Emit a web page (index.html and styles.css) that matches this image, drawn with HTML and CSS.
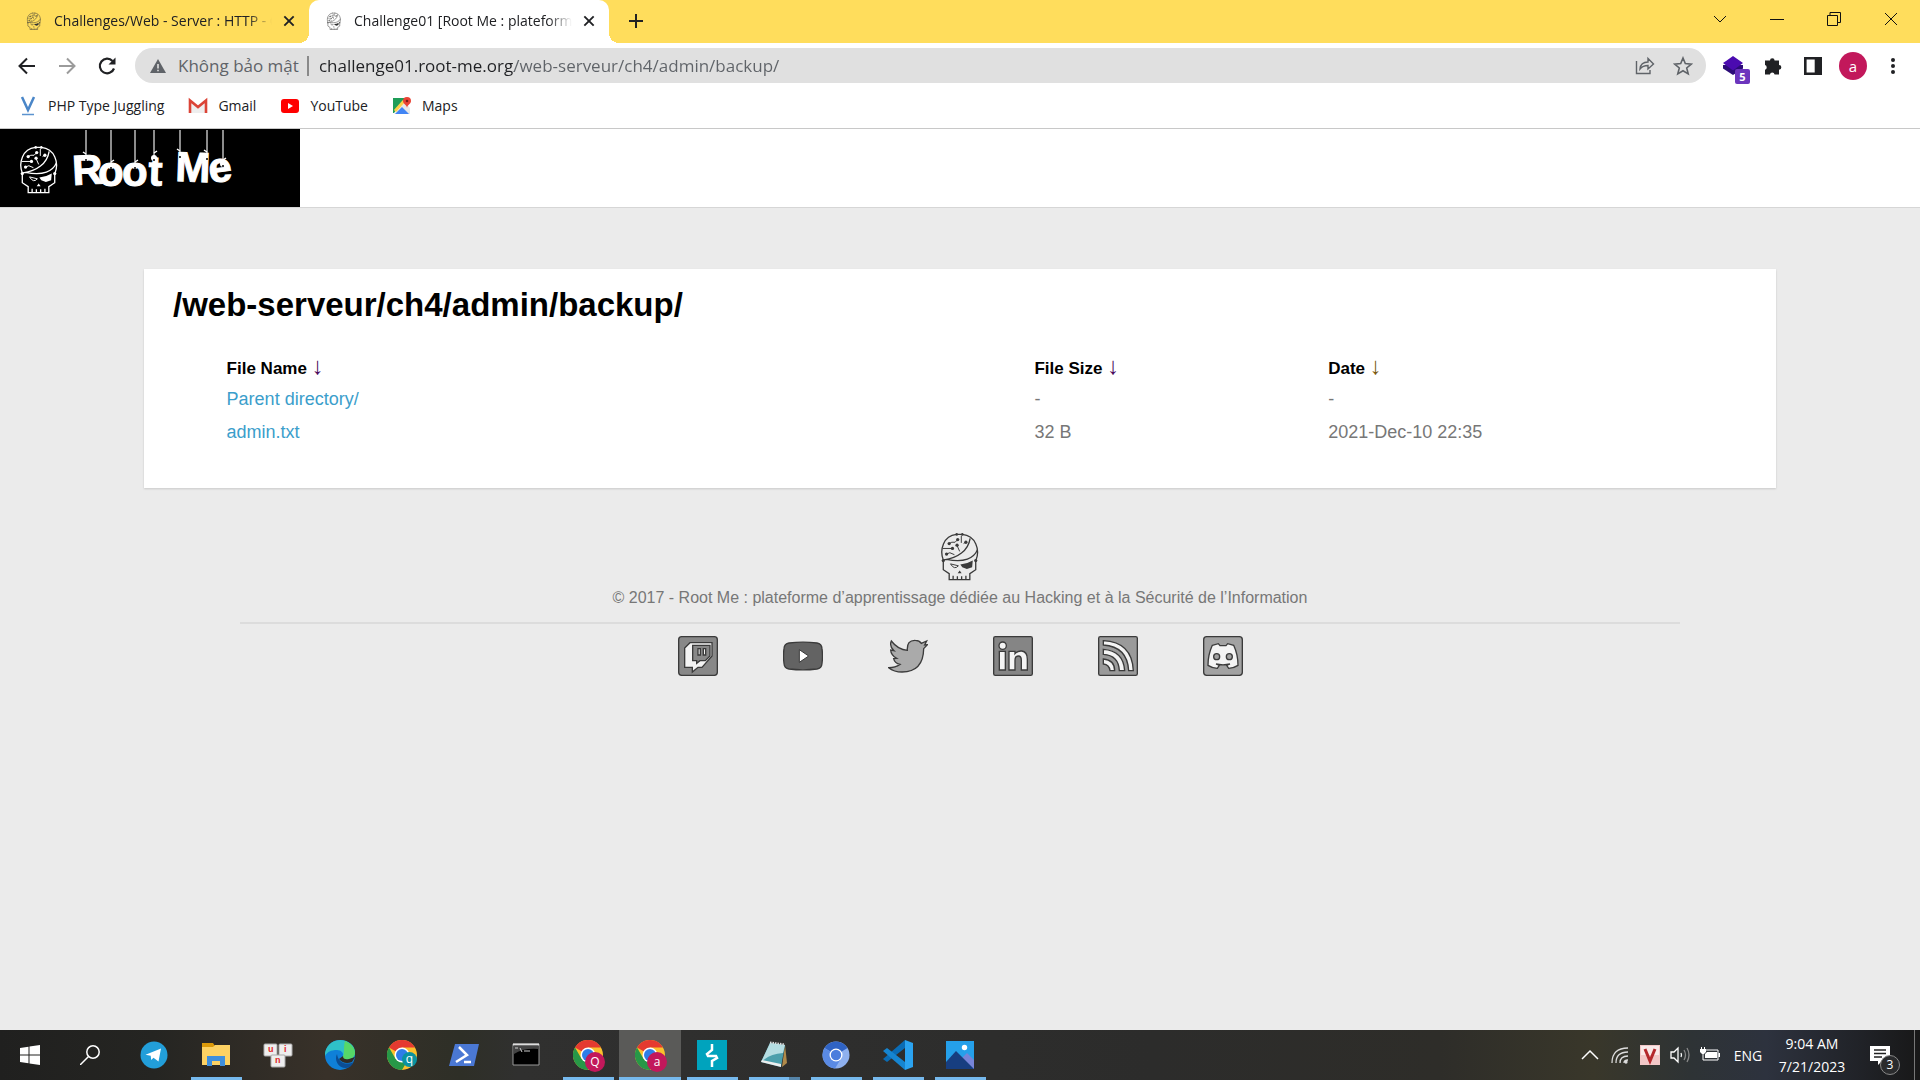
FILE: index.html
```html
<!DOCTYPE html>
<html lang="fr">
<head>
<meta charset="utf-8">
<title>Challenge01 [Root Me : plateforme d’apprentissage]</title>
<link rel="stylesheet" href="styles.css">
</head>
<body>
<svg class="defs" aria-hidden="true">
  <symbol id="skull" viewBox="33 17 116 150">
    <g fill="none" stroke="currentColor" stroke-width="4">
      <path d="M40 104C28 74 40 30 80 26M98 26C140 30 152 74 140 104M84 26h10"/>
      <path d="M40 108v26l18 12v18h63v-18l18-12v-26M70 152v11M83 154v9M96 154v9M109 152v11"/>
      <path d="M42 104C84 98 116 76 122 38M144 74C134 98 104 114 50 102"/>
    </g>
    <g fill="none" stroke="currentColor" stroke-width="3">
      <path d="M58 54l8-4h10l8-8M38 69h30M82 60l8 18M50 86l10-4 14 6M95 30v22M110 48l-8 6"/>
      <path d="M62 116l24 6q-12 14-24-6z"/>
    </g>
    <g fill="currentColor">
      <circle cx="58" cy="54" r="5"/><circle cx="84" cy="42" r="5"/><circle cx="68" cy="69" r="5"/><circle cx="82" cy="59" r="5"/><circle cx="50" cy="86" r="5"/><circle cx="109" cy="50" r="5"/>
      <circle cx="81" cy="26" r="4"/><circle cx="98" cy="26" r="4"/><circle cx="40" cy="106" r="5"/><circle cx="139" cy="106" r="5"/>
      <path d="M92 118q22-2 38-12l-2 20-16 6-14-6zM90 136l6 9H84z"/>
    </g>
  </symbol>
  <symbol id="close" viewBox="0 0 12 12"><path d="M2 2l8 8M10 2l-8 8" stroke="currentColor" stroke-width="1.600" fill="none"/></symbol>
  <symbol id="chrome" viewBox="0 0 30 30">
    <circle cx="15" cy="15" r="15" fill="#fbc02d"/>
    <path d="M15 15L2 7.500A15 15 0 0 1 28 7.500H15z" fill="#e53a30"/>
    <path d="M2 7.500A15 15 0 0 0 15 30l6.500-11.200L15 15 8.500 18.700z" fill="#279847"/>
    <circle cx="15" cy="15" r="7.500" fill="#fff"/><circle cx="15" cy="15" r="6" fill="#2f7de8"/>
  </symbol>
</svg>

<header class="browser">
  <div class="tabstrip">
    <div class="tab">
      <svg class="favicon"><use href="#skull"/></svg>
      <span class="tab-title">Challenges/Web - Server : HTTP - Open redirect</span>
      <button class="tab-close" aria-label="Close tab"><svg><use href="#close"/></svg></button>
    </div>
    <div class="tab active">
      <svg class="favicon"><use href="#skull"/></svg>
      <span class="tab-title">Challenge01 [Root Me : plateforme d’apprentissage</span>
      <button class="tab-close" aria-label="Close tab"><svg><use href="#close"/></svg></button>
    </div>
    <button class="new-tab" aria-label="New tab"><svg viewBox="0 0 16 16" width="16" height="16"><path d="M8 1v14M1 8h14" stroke="#222" stroke-width="2"/></svg></button>
    <div class="window-controls">
      <button aria-label="Search tabs"><svg viewBox="0 0 14 14" width="14" height="14"><path d="M1 4l6 6 6-6"/></svg></button>
      <button aria-label="Minimize"><svg viewBox="0 0 14 14" width="14" height="14"><path d="M0 7.500h14"/></svg></button>
      <button aria-label="Restore"><svg viewBox="0 0 14 14" width="14" height="14"><path d="M.5 3.500h10v10H.500zM3 3V.5h10.500v10H11"/></svg></button>
      <button aria-label="Close"><svg viewBox="0 0 14 14" width="14" height="14"><path d="M1 1l12 12M13 1L1 13"/></svg></button>
    </div>
  </div>

  <div class="toolbar">
    <button aria-label="Back"><svg viewBox="0 0 20 20" width="20" height="20"><path d="M18 10H3M10 2.500L2.500 10l7.500 7.500" fill="none" stroke="#202124" stroke-width="2"/></svg></button>
    <button aria-label="Forward"><svg viewBox="0 0 20 20" width="20" height="20"><path d="M2 10h15M10 2.500l7.500 7.500-7.500 7.500" fill="none" stroke="#9b9b9b" stroke-width="2"/></svg></button>
    <button aria-label="Reload"><svg viewBox="0 0 20 20" width="20" height="20"><path d="M17 12.500A7.300 7.300 0 1 1 15.500 5" fill="none" stroke="#202124" stroke-width="2.200"/><path d="M18.500 1.500v7h-7z" fill="#202124"/></svg></button>
    <div class="omnibox">
      <svg viewBox="0 0 16 16" width="16" height="16"><path d="M8 1l8 14H0z" fill="#5f6368"/><path d="M8 6v4.500M8 11.700v1.600" stroke="#e0e0e0" stroke-width="1.600"/></svg>
      <label class="security" for="url">Không bảo mật</label>
      <input id="url" class="url" type="text" spellcheck="false" value="challenge01.root-me.org/web-serveur/ch4/admin/backup/">
      <button aria-label="Share"><svg viewBox="0 0 20 20" width="20" height="20"><path d="M1.500 5v12.500H15V14M5 13c.5-5 3.500-7 8-7V2.500L18.500 8 13 13V9.500c-4 0-6 1-8 3.500z" fill="none" stroke="#5f6368" stroke-width="1.400"/></svg></button>
      <button aria-label="Bookmark this page"><svg viewBox="0 0 20 20" width="20" height="20"><path d="M10 2l2.300 5.600 6 .5-4.600 3.900 1.500 5.900L10 14.700l-5.200 3.200L6.300 12 1.700 8.100l6-.5z" fill="none" stroke="#5f6368" stroke-width="1.600"/></svg></button>
    </div>
    <div class="extensions">
      <button aria-label="Extension"><svg viewBox="0 0 20 20" width="20" height="20"><path d="M0 12.500l10 6.500 10-6.500V9L0 9z" fill="#2c0c78"/><path d="M10 0l10 7-10 7.500L0 7l3-2z" fill="#4b0bb0"/></svg><span class="count">5</span></button>
      <button aria-label="Extensions"><svg viewBox="0 0 20 20" width="20" height="20"><path d="M2 4.500h5a2.300 2.300 0 1 1 4.600 0H16V9a2.300 2.300 0 1 1 0 4.700V18.500h-4.400a2.400 2.400 0 0 0-4.700 0H2v-4.800a2.400 2.400 0 0 0 0-4.600z" fill="#202124"/></svg></button>
      <button aria-label="Side panel"><svg viewBox="0 0 18 18" width="18" height="18"><path d="M1.300 1.300h15.400v15.400H1.300zM12 1v16M14.500 1v16" fill="none" stroke="#202124" stroke-width="2.600"/></svg></button>
      <button class="avatar" aria-label="Profile">a</button>
      <button aria-label="Menu"><svg viewBox="0 0 20 20" width="20" height="20" fill="#202124"><circle cx="10" cy="4" r="2"/><circle cx="10" cy="10" r="2"/><circle cx="10" cy="16" r="2"/></svg></button>
    </div>
  </div>

  <nav class="bookmarks">
    <a href="#"><svg viewBox="0 0 20 20" width="20" height="20"><path d="M4 1l6 13 6-13" fill="none" stroke="#4a86c8" stroke-width="2.500"/><path d="M4 18.500h12" stroke="#5b93cf" stroke-width="1.500"/></svg>PHP Type Juggling</a>
    <a href="#"><svg viewBox="0 0 20 20" width="20" height="20"><path d="M2 4l8 7 8-7v13H2z" fill="#eee"/><path d="M2 17V4.500l8 6.500 8-6.500V17" fill="none" stroke="#db4437" stroke-width="2.600"/></svg>Gmail</a>
    <a href="#"><svg viewBox="0 0 20 20" width="20" height="20"><rect x="1" y="3" width="18" height="14" rx="3" fill="#f00"/><path d="M8 7l5 3-5 3z" fill="#fff"/></svg>YouTube</a>
    <a href="#"><svg viewBox="0 0 20 20" width="20" height="20"><path d="M1 2h13L2 17H1z" fill="#1f9d58"/><path d="M2 18L13 6l5 6v6z" fill="#e8e8e8"/><path d="M3 18l7-7 7 7z" fill="#4285f4"/><path d="M3 15L12 5" stroke="#fdd148" stroke-width="3"/><path d="M15 12c0-3-4-4-4-7a4 4 0 0 1 8 0c0 3-4 4-4 7z" fill="#ea4335"/><circle cx="15" cy="5" r="1.300" fill="#7c1f16"/></svg>Maps</a>
  </nav>
</header>

<div class="site-header">
  <a class="logo" href="#" aria-label="Root Me">
    <svg class="logo-art" viewBox="0 0 300 78">
      <svg x="20" y="15" width="38" height="50"><use href="#skull"/></svg>
      <path d="M86 1v27M111 1v36M135 1v36M154 1v27M180 1v25M207 1v27M223 1v33" stroke="#bbb" stroke-width="1.500"/>
      <text class="logo-text" x="73 98 122 148 165 175 210" y="56 57 57 56 56 52 54" rotate="-3 0 0 2 0 2 -7">Root Me</text>
      <g><circle cx="86" cy="29" r="3" fill="#fff"/><circle cx="111" cy="37" r="3" fill="#fff"/><circle cx="135" cy="37" r="3" fill="#fff"/><circle cx="154" cy="29" r="3" fill="#fff"/><circle cx="223" cy="35" r="3" fill="#fff"/></g>
      <g><circle cx="86" cy="31" r="1"/><circle cx="111" cy="39" r="1"/><circle cx="135" cy="39" r="1"/><circle cx="154" cy="31" r="1"/><circle cx="180" cy="28" r="1"/><circle cx="207" cy="30" r="1"/><circle cx="223" cy="37" r="1"/></g>
      <path d="M83 23l3 2M114 31l-3 2M138 31l-3 2M157 22l-3 2M177 20l3 2M204 21l3 2M226 29l-3 2" stroke="#fff" stroke-width="1.500"/>
    </svg>
  </a>
</div>

<main class="page">
  <section class="card">
    <h1>/web-serveur/ch4/admin/backup/</h1>
    <table class="listing">
      <thead>
        <tr><th class="name">File Name <a href="#">↓</a></th><th class="size">File Size <a href="#">↓</a></th><th class="date">Date <a href="#">↓</a></th></tr>
      </thead>
      <tbody>
        <tr><td><a href="#">Parent directory/</a></td><td>-</td><td>-</td></tr>
        <tr><td><a href="#">admin.txt</a></td><td>32 B</td><td>2021-Dec-10 22:35</td></tr>
      </tbody>
    </table>
  </section>

  <footer class="footer">
    <svg class="footer-skull"><use href="#skull"/></svg>
    <p>© 2017 - Root Me : plateforme d’apprentissage dédiée au Hacking et à la Sécurité de l’Information</p>
    <hr>
    <nav class="social">
      <a href="#" aria-label="Twitch"><svg viewBox="0 0 120 120"><rect x="2" y="2" width="116" height="116" rx="9" fill="#888" stroke="#3b3b3b" stroke-width="4"/><g stroke="#3b3b3b" stroke-width="4"><path d="M20 36l16-16h66v40L72 94H60l-17 14V94H20z" fill="#f4f4f4"/><path d="M44 28h52v32L82 74H66L56 82v-8H44z" fill="#888"/><path d="M60 38h7v19h-7zM76 38h7v19h-7z" fill="#f4f4f4"/></g></svg></a>
      <a href="#" aria-label="YouTube"><svg viewBox="0 0 120 120"><path d="M18 21Q60 16 102 21Q116 23 117 38Q120 60 117 82Q116 97 102 99Q60 104 18 99Q4 97 3 82Q0 60 3 38Q4 23 18 21z" fill="#636363" stroke="#3b3b3b" stroke-width="4"/><path d="M49 41l28 19-28 19z" fill="#fff" stroke="#3b3b3b" stroke-width="3"/></svg></a>
      <a href="#" aria-label="Twitter"><svg viewBox="0 0 120 120"><path d="M2 95q20 0 34-10Q20 82 17 68l9-1Q9 58 8 42l10 2Q3 30 10 15q20 26 48 28Q56 12 82 13q12 0 18 9l16-7-6 12 8-1-11 12Q106 107 42 108 18 108 2 95z" fill="#aaa" stroke="#3b3b3b" stroke-width="4"/></svg></a>
      <a href="#" aria-label="LinkedIn"><svg viewBox="0 0 120 120"><rect x="2" y="2" width="116" height="116" rx="5" fill="#858585" stroke="#3b3b3b" stroke-width="4"/><g fill="#f4f4f4" stroke="#3b3b3b" stroke-width="4"><circle cx="29" cy="29" r="11"/><path d="M19 46h18v56H19zM48 46h18v7q8-9 20-8 17 2 17 24v33H85V73q0-13-9-13-10 0-10 13v29H48z"/></g></svg></a>
      <a href="#" aria-label="RSS"><svg viewBox="0 0 120 120"><rect x="2" y="2" width="116" height="116" rx="5" fill="#9a9a9a" stroke="#3b3b3b" stroke-width="4"/><path d="M16 14q86 4 90 90H92Q88 32 16 27zM16 40q60 4 64 64H64Q62 58 16 55zM16 69q34 3 34 35H36q-2-18-20-20z" fill="#f4f4f4" stroke="#3b3b3b" stroke-width="4"/></svg></a>
      <a href="#" aria-label="Discord"><svg viewBox="0 0 120 120"><rect x="2" y="2" width="116" height="116" rx="9" fill="#a2a2a2" stroke="#3b3b3b" stroke-width="4"/><path d="M28 28l18-5 5 6h18l5-6 18 5q13 28 13 60-12 8-28 9l-6-9 10-4q-21 5-42 0l10 4-6 9Q27 96 15 88q0-32 13-60z" fill="#f4f4f4" stroke="#3b3b3b" stroke-width="4"/><circle cx="41" cy="62" r="9" fill="#a2a2a2" stroke="#3b3b3b" stroke-width="4"/><circle cx="79" cy="62" r="9" fill="#a2a2a2" stroke="#3b3b3b" stroke-width="4"/></svg></a>
    </nav>
  </footer>
</main>

<div class="taskbar">
  <button class="start" aria-label="Start"><svg viewBox="0 0 20 20" width="20" height="20" fill="#fff"><path d="M0 3l8.500-1.200v7.700H0zM9.500 1.600L20 0v9.500H9.500zM0 10.500h8.500v7.700L0 17zM9.500 10.500H20V20L9.500 18.400z"/></svg></button>
  <button class="search" aria-label="Search"><svg viewBox="0 0 20 20" width="20" height="20" fill="none" stroke="#fff" stroke-width="1.500"><circle cx="13" cy="7" r="6.200"/><path d="M8.500 11.500L0 20"/></svg></button>
  <div class="apps">
    <button aria-label="Telegram"><svg viewBox="0 0 30 30"><circle cx="15" cy="15" r="13.500" fill="#229ed9"/><path d="M6.500 14.700L22 8.500l-2.500 13-5-3.800-2.300 2.400-.5-4.300z" fill="#fff"/></svg></button>
    <button class="open" aria-label="File Explorer"><svg viewBox="0 0 30 30"><path d="M1 3h11l2 3h-1v4H1z" fill="#dc9a0a"/><path d="M1 7h11l2-2h15v20H1z" fill="#fdd263"/><path d="M6 26V16h18v10h-5v-5h-8v5z" fill="#3f8fdc"/></svg></button>
    <button aria-label="UniKey"><svg viewBox="0 0 30 30"><g fill="#eee" stroke="#aaa"><rect x="1" y="4" width="13" height="12" rx="1"/><rect x="16" y="4" width="13" height="12" rx="1"/><rect x="8" y="15" width="14" height="12" rx="1"/></g><g class="keys"><text x="5" y="12">u</text><text x="21" y="12">i</text><text x="12" y="23">n</text></g></svg></button>
    <button aria-label="Edge"><svg viewBox="0 0 30 30"><circle cx="15" cy="15" r="15" fill="#0f80d8"/><path d="M0 13C2 3 10 0 15 0c9 0 15 6 15 12 0 5-4 8-9 8-4 0-4-2-3-4 1-3-2-6-6-6-6 0-10 2-12 6z" fill="#2fc0c8"/><path d="M20 1c7 3 10 8 10 12 0 4-4 7-9 7-4 0-4-2-3-4 2-3 0-8 2-15z" fill="#56d868"/><path d="M12 14c-3 6 1 14 9 14 4 0 6-3 8-6-9 4-16 0-17-8z" fill="#0b4d94"/><path d="M30 17l-3 5q-8 3-13-3l4-3q0 4 6 3z" fill="#302c26"/></svg></button>
    <button aria-label="Chrome"><svg viewBox="0 0 30 30"><use href="#chrome"/></svg><span class="profile teal">q</span></button>
    <button aria-label="PowerShell"><svg viewBox="0 0 30 30"><path d="M6 4h24l-5 22H0z" fill="#4a78d4"/><path d="M10 7l8 8-11 7M15 22h7" fill="none" stroke="#fff" stroke-width="2.500"/></svg></button>
    <button aria-label="Command Prompt"><svg viewBox="0 0 30 30"><path d="M2 4h26v21H2z" fill="#000" stroke="#999"/><path d="M3 6h24v3Q12 8 3 14z" fill="#444"/><path d="M2 4.500h26" stroke="#ddd" stroke-width="2"/><path d="M4 8h3M9 8l2 4M13 11h6" stroke="#ccc"/></svg></button>
    <button class="open" aria-label="Chrome, profile Q"><svg viewBox="0 0 30 30"><use href="#chrome"/></svg><span class="profile">Q</span></button>
    <button class="open current" aria-label="Chrome, profile a"><svg viewBox="0 0 30 30"><use href="#chrome"/></svg><span class="profile">a</span></button>
    <button class="open" aria-label="Burp Suite"><svg viewBox="0 0 30 30"><path d="M0 0h30v30H0z" fill="#00a3bd"/><path d="M15 4v6l-5 4 1 2h8l1 2-5 3v6" fill="none" stroke="#fff" stroke-width="2.500"/></svg></button>
    <button class="open stacked" aria-label="Notepad++"><svg viewBox="0 0 30 30"><path d="M26 5l2 18-5 4z" fill="#b08a4a"/><path d="M11 3l15 2-4 22-20-5z" fill="#4c9fac"/><path d="M11 3l15 2-2 8Q12 14 6 19l-4 3z" fill="#b5dde2"/><path d="M2 22l20 5v-3L3 20z" fill="#eee"/><path d="M11 2.500l15 2" stroke="#ddd" stroke-width="2" stroke-dasharray="1.500 1"/></svg></button>
    <button class="open" aria-label="Chromium"><svg viewBox="0 0 30 30"><circle cx="15" cy="15" r="13.500" fill="#8eb0ee"/><path d="M15 15L3.500 8a13.500 13.500 0 0 1 23 0z" fill="#2f63c4"/><path d="M3.500 8A13.500 13.500 0 0 0 14 28.500l6-10z" fill="#5a8ae4"/><circle cx="15" cy="15" r="6.500" fill="#fff"/><circle cx="15" cy="15" r="5.200" fill="#4a7ddd"/></svg></button>
    <button class="open" aria-label="Visual Studio Code"><svg viewBox="0 0 30 30"><path d="M22 0v8L4 22l-4-3z" fill="#0a6cb5"/><path d="M22 30v-8L4 8l-4 3z" fill="#1685d0"/><path d="M22 0l8 3v24l-8 3z" fill="#2ba3f0"/></svg></button>
    <button class="open" aria-label="Photos"><svg viewBox="0 0 30 30"><path d="M1 1h28v28H1z" fill="#25a0ea"/><path d="M14 21l8-8 7 7v9H14z" fill="#7784d8"/><path d="M1 22l10-11 18 18H1z" fill="#173e80"/><circle cx="19.500" cy="7.500" r="2.700" fill="#fff"/></svg></button>
  </div>
  <div class="tray">
    <button aria-label="Show hidden icons"><svg viewBox="0 0 20 20" width="20" height="20"><path d="M2 14l8-8 8 8" fill="none" stroke="#fff" stroke-width="1.500"/></svg></button>
    <button aria-label="Network"><svg viewBox="0 0 20 20" width="20" height="20" fill="none" stroke="#ddd" stroke-width="1.300"><path d="M2 18Q2 3 18 3M6 18Q6 7 18 7M10 18q0-7 8-7M14 18q0-3 4-3"/><circle cx="16" cy="17" r="1" fill="#fff"/></svg></button>
    <button aria-label="UniKey"><svg viewBox="0 0 20 20" width="20" height="20"><path d="M0 0h20v20H0z" fill="#f2c7c7"/><path d="M1 1h18v9H1z" fill="#fae9e9"/><path d="M5 4l5 12 5-12" fill="none" stroke="#b4282c" stroke-width="3"/></svg></button>
    <button aria-label="Volume"><svg viewBox="0 0 20 20" width="20" height="20" fill="none" stroke="#fff" stroke-width="1.300"><path d="M1 7h3l4-4v14l-4-4H1zM11 8q1 2 0 4"/><path d="M14 5q3 5 0 10M17 3q4 7 0 14" stroke="#888"/></svg></button>
    <button aria-label="Battery"><svg viewBox="0 0 20 20" width="20" height="20"><path d="M6 5h12v10H3V9" fill="none" stroke="#fff"/><path d="M7 7h10v6H5V9zM18.500 8H20v4h-1.500zM0 4h6v3L4 9H2L0 7zM1 2h1v2H1zM4 2h1v2H4z" fill="#fff"/></svg></button>
    <button class="lang">ENG</button>
    <button class="clock"><span>9:04 AM</span><span>7/21/2023</span></button>
    <button class="notify" aria-label="Notifications"><svg viewBox="0 0 20 20" width="20" height="20"><path d="M0 1h20v15h-8l-4 4v-4H0z" fill="#fff"/><path d="M4 5h12M4 8.500h12M4 12h8" stroke="#222" stroke-width="1.300"/></svg><span class="notify-count">3</span></button>
  </div>
</div>
</body>
</html>
```
FILE: styles.css
```css
* { box-sizing: border-box; }

body {
  margin: 0;
  min-height: 100vh;
  display: flex;
  flex-direction: column;
  background: #ebebeb;
  font-family: "Liberation Sans", Arial, sans-serif;
}

button {
  display: flex;
  align-items: center;
  justify-content: center;
  padding: 0;
  border: 0;
  background: none;
  font: inherit;
  color: inherit;
}

a { text-decoration: none; }
svg { display: block; flex: none; }
.defs { position: absolute; width: 0; height: 0; }

/* Browser chrome */
.browser {
  background: #fff;
  border-bottom: 1px solid #c8c8c8;
  font-family: "Open Sans", "Noto Sans", sans-serif;
  color: #202124;
}

.tabstrip {
  display: flex;
  height: 43px;
  background: #ffdd5c;
}

.tab {
  position: relative;
  display: flex;
  align-items: center;
  width: 300px;
  height: 43px;
  padding: 0 12px 2px 16px;
  border-radius: 10px 10px 0 0;
}

.tab:first-child { margin-left: 9px; }
.tab.active { background: #fff; }

.tab.active::before,
.tab.active::after {
  content: "";
  position: absolute;
  bottom: 0;
  width: 10px;
  height: 10px;
}

.tab.active::before { left: -10px; background: radial-gradient(circle at 0 0, transparent 10px, #fff 10px); }
.tab.active::after { right: -10px; background: radial-gradient(circle at 100% 0, transparent 10px, #fff 10px); }

.favicon { width: 18px; height: 18px; color: #333; margin-right: 11px; }

.tab-title {
  flex: 1;
  overflow: hidden;
  white-space: nowrap;
  font-size: 14px;
  line-height: 20px;
  -webkit-mask-image: linear-gradient(90deg, #000 calc(100% - 24px), transparent);
  mask-image: linear-gradient(90deg, #000 calc(100% - 24px), transparent);
}

.tab-close { width: 16px; height: 16px; margin-left: 9px; }
.tab-close svg { width: 14px; height: 14px; }
.new-tab { width: 54px; height: 41px; }
.window-controls { display: flex; margin-left: auto; margin-right: 1px; }
.window-controls button { width: 57px; height: 37px; }
.window-controls path { fill: none; stroke: #111; stroke-width: 1; }

.toolbar {
  display: flex;
  align-items: center;
  height: 45px;
  padding: 0 7px;
}

.toolbar > button { width: 40px; height: 40px; }

.omnibox {
  display: flex;
  align-items: center;
  flex: 1;
  height: 35px;
  margin-left: 8px;
  padding: 0 11px 0 15px;
  border-radius: 18px;
  background: #e0e0e0;
  font-size: 17px;
}

.security {
  margin-left: 12px;
  padding-right: 8px;
  border-right: 2px solid #8a8a8a;
  line-height: 20px;
  color: #5f6368;
}

.url {
  flex: 1;
  min-width: 0;
  margin-left: 10px;
  padding: 0;
  border: 0;
  outline: 0;
  font: inherit;
  color: transparent;
  /* the host name is darker than the path */
  background: linear-gradient(90deg, #202124 195px, #5f6368 195px);
  -webkit-background-clip: text;
  background-clip: text;
}

.omnibox button { width: 40px; height: 35px; }
.omnibox button:last-child { width: 24px; margin-left: 6px; }
.extensions { display: flex; align-items: center; margin-left: 7px; }
.extensions button { position: relative; width: 40px; height: 40px; }

.extensions .count {
  position: absolute;
  left: 22px;
  top: 23px;
  width: 15px;
  height: 15px;
  border-radius: 2px;
  background: #6c35bd;
  color: #fff;
  font: bold 11px/15px "Open Sans", sans-serif;
}

.extensions .avatar {
  width: 28px;
  height: 28px;
  margin: 0 6px;
  border-radius: 50%;
  background: #c2185b;
  color: #fff;
  font-size: 15px;
}

.bookmarks {
  display: flex;
  align-items: center;
  gap: 24px;
  height: 40px;
  padding: 0 18px 5px;
  font-size: 14px;
}

.bookmarks a { display: flex; align-items: center; gap: 10px; color: #202124; }

/* Site */
.site-header { background: #fff; border-bottom: 1px solid #d6d6d6; }
.logo { display: block; width: 300px; background: #000; color: #fff; }
.logo-art { width: 300px; height: 78px; }
.logo-text { font: bold 42px "Liberation Sans", sans-serif; fill: #fff; stroke: #fff; stroke-width: 1; }

.page { flex: 1; padding-top: 61px; }

.card {
  width: 85%;
  margin: 0 auto;
  padding: 16px 0 40px;
  background: #fff;
  box-shadow: 0 1px 2px rgba(0, 0, 0, 0.15);
}

.card h1 { margin: 0 29px 28px; font-size: 33px; line-height: 40px; color: #000; }

.listing {
  width: 90%;
  margin: 0 auto;
  border-collapse: collapse;
  table-layout: fixed;
  font-size: 18px;
  color: #777;
}

.listing th, .listing td { height: 33px; padding: 0 0 0 1px; text-align: left; line-height: 22px; }
.listing th { height: 29px; font-size: 17px; color: #000; }
.listing th a { color: #4a0a5c; font-size: 24px; font-weight: normal; line-height: 20px; }
.listing .date a { color: #7a5a10; }
.listing .name { width: 55%; }
.listing .size { width: 20%; }
.listing td a { color: #3b9ecb; }

.footer { display: flex; flex-direction: column; align-items: center; padding-top: 43px; }
.footer-skull { width: 38px; height: 50px; color: #3a3a3a; }
.footer p { margin: 5px 0 12px; font-size: 16px; line-height: 24px; color: #777; }
.footer hr { width: 75%; height: 2px; margin: 0 0 12px; border: 0; background: #dcdcdc; }
.social { display: flex; gap: 65px; }
.social svg { width: 40px; height: 40px; }

/* Desktop taskbar */
.taskbar {
  display: flex;
  height: 50px;
  background: linear-gradient(90deg, #20201f 0%, #252522 8%, #383129 17%, #2e2f27 24%, #30302f 27%, #2c2c2b 60%, #2e2d29 75%, #39372a 83%, #2e3335 88%, #2d323e 92%, #202227 97%, #181818 100%);
  color: #fff;
  font-family: "Open Sans", "Noto Sans", sans-serif;
}

.start, .search { width: 60px; height: 50px; }
.apps { display: flex; margin-left: 3px; }
.apps button { position: relative; width: 62px; height: 50px; }
.apps svg { width: 30px; height: 30px; }
.keys { font: bold 9px "Liberation Sans", sans-serif; fill: #e02828; }

.apps .open::after {
  content: "";
  position: absolute;
  left: 6px;
  bottom: 0;
  width: 51px;
  height: 3px;
  background: #76b9ed;
}

.apps .current { background: #5a5a58; }
.apps .current::after { left: 0; width: 100%; }
.apps .stacked::after { background: linear-gradient(90deg, #76b9ed 40px, #5584a8 40px); }

.profile {
  position: absolute;
  left: 28px;
  top: 22px;
  width: 20px;
  height: 20px;
  border-radius: 50%;
  background: #c2185b;
  font-size: 12px;
  line-height: 19px;
}

.profile.teal { left: 31px; width: 15px; height: 15px; line-height: 13px; background: #0a92a0; }

.tray { display: flex; margin-left: auto; margin-right: 5px; border-right: 1px solid #777; font-size: 14px; }
.tray button { width: 30px; height: 50px; }
.tray .lang { width: 46px; }
.tray .clock { flex-direction: column; width: 82px; line-height: 23px; }
.tray .notify { position: relative; width: 54px; margin-right: 7px; }

.notify-count {
  position: absolute;
  left: 27px;
  top: 25px;
  width: 20px;
  height: 20px;
  border: 1px solid #888;
  border-radius: 50%;
  background: #2a2b2d;
  font-size: 12px;
  line-height: 18px;
}
```
